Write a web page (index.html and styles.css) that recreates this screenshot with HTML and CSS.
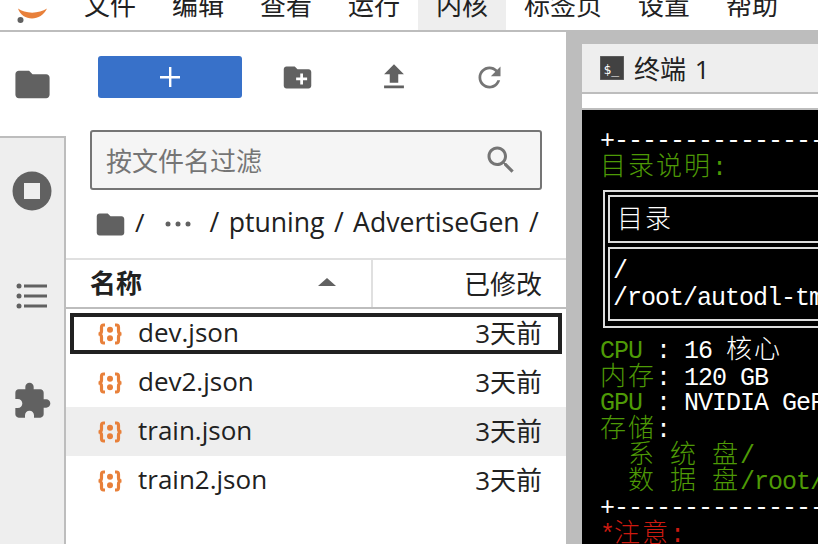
FILE: index.html
```html
<!DOCTYPE html>
<html lang="zh">
<head>
<meta charset="utf-8">
<title>JupyterLab</title>
<link rel="stylesheet" href="styles.css">
</head>
<body>
<header class="menubar">
  <div class="logo">
    <svg width="66" height="30" viewBox="0 0 66 30"><path class="logo-arc" d="M18 8.500C25 14 39 14 47 8.500C44 15 38 18.500 32 18.500C26 18.500 20 15 18 8.500Z"/><circle class="logo-dot" cx="20.500" cy="20" r="3"/></svg>
  </div>
  <nav class="menu">
    <span class="menu-item">文件</span>
    <span class="menu-item">编辑</span>
    <span class="menu-item">查看</span>
    <span class="menu-item">运行</span>
    <span class="menu-item menu-item-active">内核</span>
    <span class="menu-item">标签页</span>
    <span class="menu-item">设置</span>
    <span class="menu-item">帮助</span>
  </nav>
</header>
<main class="main">
  <aside class="side">
    <div class="side-active">
      <svg class="icon side-folder" width="41" height="41" viewBox="0 0 24 24"><path d="M10 4H4c-1.100 0-2 .9-2 2v12c0 1.100.9 2 2 2h16c1.100 0 2-.9 2-2V8c0-1.100-.9-2-2-2h-8l-2-2z"/></svg>
    </div>
    <div class="side-rest">
      <div class="side-slot">
        <svg class="side-stop" width="40" height="40" viewBox="0 0 40 40"><circle class="icon" cx="20" cy="20" r="19.500"/><rect class="stop-square" x="12" y="12" width="16" height="16"/></svg>
      </div>
      <div class="side-slot">
        <svg class="icon" width="32" height="26" viewBox="0 0 32 26"><circle cx="3" cy="3" r="2.500"/><circle cx="3" cy="13" r="2.500"/><circle cx="3" cy="23" r="2.500"/><rect x="8" y="1.500" width="23" height="3"/><rect x="8" y="11.500" width="23" height="3"/><rect x="8" y="21.500" width="23" height="3"/></svg>
      </div>
      <div class="side-slot">
        <svg class="icon side-puzzle" width="40" height="40" viewBox="0 0 24 24"><path d="M20.500 11H19V7c0-1.100-.9-2-2-2h-4V3.500C13 2.120 11.880 1 10.500 1S8 2.120 8 3.500V5H4c-1.100 0-1.990.9-1.990 2v3.800H3.500c1.490 0 2.700 1.210 2.700 2.700s-1.210 2.700-2.700 2.700H2V20c0 1.100.9 2 2 2h3.800v-1.500c0-1.490 1.210-2.700 2.700-2.700 1.490 0 2.700 1.210 2.700 2.700V22H17c1.100 0 2-.9 2-2v-4h1.500c1.380 0 2.500-1.120 2.500-2.500S21.880 11 20.500 11z"/></svg>
      </div>
    </div>
  </aside>
  <section class="panel">
    <div class="toolbar">
      <button class="new-btn" type="button">
        <svg width="20" height="20" viewBox="0 0 20 20"><path class="plus" d="M9 0h2.400v9H20v2.400h-8.600V20H9v-8.600H0V9h9z"/></svg>
      </button>
      <span class="tool">
        <svg class="icon tool-folder" width="33" height="33" viewBox="0 0 24 24"><path d="M20 6h-8l-2-2H4c-1.110 0-1.990.89-1.990 2L2 18c0 1.110.89 2 2 2h16c1.110 0 2-.89 2-2V8c0-1.110-.89-2-2-2zm-1 8h-3v3h-2v-3h-3v-2h3V9h2v3h3v2z"/></svg>
      </span>
      <span class="tool">
        <svg class="icon" width="34" height="34" viewBox="0 0 24 24"><path d="M9 16h6v-6h4l-7-7-7 7h4zm-4 2h14v2H5z"/></svg>
      </span>
      <span class="tool">
        <svg class="icon-light tool-refresh" width="33" height="33" viewBox="0 0 24 24"><path d="M17.650 6.350C16.200 4.900 14.210 4 12 4c-4.420 0-7.990 3.580-7.990 8s3.570 8 7.990 8c3.730 0 6.840-2.550 7.730-6h-2.080c-.82 2.330-3.040 4-5.650 4-3.310 0-6-2.690-6-6s2.690-6 6-6c1.660 0 3.140.69 4.220 1.780L13 11h7V4l-2.350 2.350z"/></svg>
      </span>
    </div>
    <div class="filter">
      <span class="filter-text">按文件名过滤</span>
      <svg class="icon-light" width="36" height="36" viewBox="0 0 24 24"><path d="M15.500 14h-.79l-.28-.27C15.410 12.590 16 11.110 16 9.500 16 5.910 13.090 3 9.500 3S3 5.910 3 9.500 5.910 16 9.500 16c1.610 0 3.090-.59 4.230-1.570l.27.28v.79l5 4.990L20.490 19l-4.990-5zm-6 0C7.010 14 5 11.990 5 9.500S7.010 5 9.500 5 14 7.010 14 9.500 11.990 14 9.500 14z"/></svg>
    </div>
    <div class="crumbs">
      <svg class="icon" width="33" height="33" viewBox="0 0 24 24"><path d="M10 4H4c-1.100 0-2 .9-2 2v12c0 1.100.9 2 2 2h16c1.100 0 2-.9 2-2V8c0-1.100-.9-2-2-2h-8l-2-2z"/></svg>
      <span class="crumb-sep">/</span>
      <svg class="icon crumb-dots" width="26" height="6" viewBox="0 0 26 6"><circle cx="3" cy="3" r="2.500"/><circle cx="13" cy="3" r="2.500"/><circle cx="23" cy="3" r="2.500"/></svg>
      <span class="crumb-path">/ ptuning / AdvertiseGen /</span>
    </div>
    <div class="list-head">
      <div class="col-name">
        <span class="col-title">名称</span>
        <svg class="icon col-sort" width="18" height="8" viewBox="0 0 18 8"><path d="M9 0l9 8H0z"/></svg>
      </div>
      <div class="col-mod">已修改</div>
    </div>
    <ul class="rows">
      <li class="row row-selected">
        <svg class="json" width="26" height="22" viewBox="0 0 26 22"><path d="M8 2H6.500C5 2 4.500 3 4.500 4.500V8C4.500 9.500 3.500 11 1.500 11C3.500 11 4.500 12.500 4.500 14V17.500C4.500 19 5 20 6.500 20H8M18 2H19.500C21 2 21.500 3 21.500 4.500V8C21.500 9.500 22.500 11 24.500 11C22.500 11 21.500 12.500 21.500 14V17.500C21.500 19 21 20 19.500 20H18"/><circle cx="13" cy="6.800" r="3"/><circle cx="13" cy="15.200" r="3"/></svg>
        <span class="row-name">dev.json</span><span class="row-date">3天前</span>
      </li>
      <li class="row">
        <svg class="json" width="26" height="22" viewBox="0 0 26 22"><path d="M8 2H6.500C5 2 4.500 3 4.500 4.500V8C4.500 9.500 3.500 11 1.500 11C3.500 11 4.500 12.500 4.500 14V17.500C4.500 19 5 20 6.500 20H8M18 2H19.500C21 2 21.500 3 21.500 4.500V8C21.500 9.500 22.500 11 24.500 11C22.500 11 21.500 12.500 21.500 14V17.500C21.500 19 21 20 19.500 20H18"/><circle cx="13" cy="6.800" r="3"/><circle cx="13" cy="15.200" r="3"/></svg>
        <span class="row-name">dev2.json</span><span class="row-date">3天前</span>
      </li>
      <li class="row row-hover">
        <svg class="json" width="26" height="22" viewBox="0 0 26 22"><path d="M8 2H6.500C5 2 4.500 3 4.500 4.500V8C4.500 9.500 3.500 11 1.500 11C3.500 11 4.500 12.500 4.500 14V17.500C4.500 19 5 20 6.500 20H8M18 2H19.500C21 2 21.500 3 21.500 4.500V8C21.500 9.500 22.500 11 24.500 11C22.500 11 21.500 12.500 21.500 14V17.500C21.500 19 21 20 19.500 20H18"/><circle cx="13" cy="6.800" r="3"/><circle cx="13" cy="15.200" r="3"/></svg>
        <span class="row-name">train.json</span><span class="row-date">3天前</span>
      </li>
      <li class="row">
        <svg class="json" width="26" height="22" viewBox="0 0 26 22"><path d="M8 2H6.500C5 2 4.500 3 4.500 4.500V8C4.500 9.500 3.500 11 1.500 11C3.500 11 4.500 12.500 4.500 14V17.500C4.500 19 5 20 6.500 20H8M18 2H19.500C21 2 21.500 3 21.500 4.500V8C21.500 9.500 22.500 11 24.500 11C22.500 11 21.500 12.500 21.500 14V17.500C21.500 19 21 20 19.500 20H18"/><circle cx="13" cy="6.800" r="3"/><circle cx="13" cy="15.200" r="3"/></svg>
        <span class="row-name">train2.json</span><span class="row-date">3天前</span>
      </li>
    </ul>
  </section>
  <section class="dock">
    <div class="tabbar">
      <svg width="24" height="24" viewBox="0 0 24 24"><rect class="term-icon-bg" width="24" height="24"/><text class="term-icon-text" x="3.500" y="18">$_</text></svg>
      <span class="tab-label">终端 1</span>
    </div>
    <div class="tab-gap"></div>
    <div class="terminal">
      <div class="line">+------------------</div>
      <div class="line green"><span class="cn">目录说明</span>:</div>
      <div class="tbl">
        <div class="cell cell-head"><span class="cn">目录</span></div>
        <div class="cell cell-body">
          <div class="line">/</div>
          <div class="line">/root/autodl-tmp</div>
        </div>
      </div>
      <div class="line"><span class="green">CPU </span>: 16 <span class="cn">核心</span></div>
      <div class="line"><span class="green cn">内存</span>: 120 GB</div>
      <div class="line"><span class="green">GPU </span>: NVIDIA GeForce</div>
      <div class="line"><span class="green cn">存储</span>:</div>
      <div class="line green">  <span class="cn">系</span> <span class="cn">统</span> <span class="cn">盘</span>/</div>
      <div class="line green">  <span class="cn">数</span> <span class="cn">据</span> <span class="cn">盘</span>/root/autodl</div>
      <div class="line">+------------------</div>
      <div class="line red">*<span class="cn">注意</span>:</div>
    </div>
  </section>
</main>
</body>
</html>
```
FILE: styles.css
```css
* { box-sizing: border-box; }
html, body { margin: 0; padding: 0; height: 544px; overflow: hidden; background: #fff; }
body { font-family: "Open Sans", "Noto Sans CJK SC", sans-serif; font-size: 26px; color: #212121; }
svg { display: block; flex: none; }

.icon { fill: #616161; }
.icon-light { fill: #757575; }

.menubar { display: flex; height: 32px; border-bottom: 2px solid #bdbdbd; background: #fff; }
.logo { width: 66px; flex: none; }
.logo-arc { fill: #e8803a; }
.logo-dot { fill: #616161; }
.menu { display: flex; }
.menu-item { height: 30px; padding: 0 18px; line-height: 11px; white-space: nowrap; }
.menu-item-active { background: #eee; }

.main { display: flex; height: 512px; }

.side { width: 66px; flex: none; display: flex; flex-direction: column; }
.side-active { height: 104px; display: flex; align-items: center; justify-content: center; }
.side-folder { margin-right: 2px; }
.side-rest { flex: 1; background: #eee; border-top: 2px solid #bdbdbd; border-right: 2px solid #bdbdbd; padding-top: 2px; }
.side-slot { height: 104px; display: flex; align-items: center; justify-content: center; }
.side-stop { margin-bottom: 2px; }
.side-puzzle { margin-top: 2px; }
.stop-square { fill: #eee; }

.panel { width: 500px; flex: none; display: flex; flex-direction: column; background: #fff; }
.toolbar { display: flex; align-items: center; height: 42px; margin-top: 24px; padding-left: 32px; }
.new-btn { width: 144px; height: 42px; margin: 0 8px 0 0; padding: 0; border: 0; border-radius: 3px; background: #3871c9; display: flex; align-items: center; justify-content: center; }
.plus { fill: #fff; }
.tool { width: 96px; display: flex; justify-content: center; }
.tool-folder { margin-right: 1px; }
.tool-refresh { margin-right: 2px; }

.filter { display: flex; align-items: center; justify-content: space-between; height: 60px; margin: 32px 24px 0; padding: 0 21px 0 14px; background: #f5f5f5; border: 2px solid #757575; border-radius: 3px; }
.filter-text { color: #757575; }

.crumbs { display: flex; align-items: center; height: 68px; padding-left: 28px; white-space: nowrap; }
.crumb-sep { margin-left: 8px; padding-bottom: 5px; }
.crumb-dots { margin: 0 19px 0 20px; }
.crumb-path { font-size: 26.600px; word-spacing: 2.500px; padding-bottom: 5px; }

.list-head { display: flex; height: 51px; border-top: 2px solid #e0e0e0; border-bottom: 2px solid #bdbdbd; }
.col-name { width: 307px; display: flex; align-items: center; justify-content: space-between; padding: 0 35px 0 24px; border-right: 2px solid #e0e0e0; font-weight: 700; }
.col-title { padding-bottom: 3px; }
.col-sort { margin-bottom: 3px; }
.col-mod { flex: 1; padding-right: 24px; text-align: right; line-height: 49px; }

.rows { list-style: none; margin: 0; padding: 0; }
.row { display: flex; align-items: center; height: 49px; padding: 0 24px 0 31px; white-space: nowrap; }
.row-selected { outline: 4px solid #212121; outline-offset: -8px; }
.row-hover { background: #eee; }
.json { fill: none; stroke: #e8803a; stroke-width: 3.200; }
.json circle { fill: #e8803a; stroke: none; }
.row-name { flex: 1; margin-left: 15px; padding-bottom: 3px; }
.row-date { text-align: right; padding-bottom: 3px; }

.dock { flex: 1; min-width: 0; display: flex; flex-direction: column; background: #bdbdbd; padding: 12px 0 0 16px; }
.tabbar { display: flex; align-items: center; height: 50px; padding-left: 18px; background: #eee; border-bottom: 2px solid #bdbdbd; flex: none; }
.term-icon-bg { fill: #424242; stroke: #757575; }
.term-icon-text { fill: #fff; font: 13px "DejaVu Sans Mono", monospace; }
.tab-label { margin-left: 10px; word-spacing: 2px; }
.tab-gap { height: 16px; background: #fff; border-bottom: 2px solid #bdbdbd; flex: none; }

.terminal { flex: 1; overflow: hidden; background: #000; color: #fff; padding: 19px 0 0 18px; font-family: "Liberation Mono", "Noto Sans CJK SC", monospace; font-size: 25px; letter-spacing: -1px; }
.line { height: 26.200px; line-height: 26px; white-space: pre; }
.cn { font-size: 26px; letter-spacing: 2px; font-weight: 300; }
.green { color: #4e9a06; }
.red { color: #cc1a10; }
.tbl { width: 400px; margin: 9px 0 10px 3px; padding: 3px; border: 2px solid #ddd; height: 138px; }
.cell { border: 2px solid #ddd; padding-left: 7px; }
.cell-head { height: 48px; line-height: 48px; }
.cell-body { height: 74px; margin-top: 4px; padding: 10px 0 0 3px; }
```
